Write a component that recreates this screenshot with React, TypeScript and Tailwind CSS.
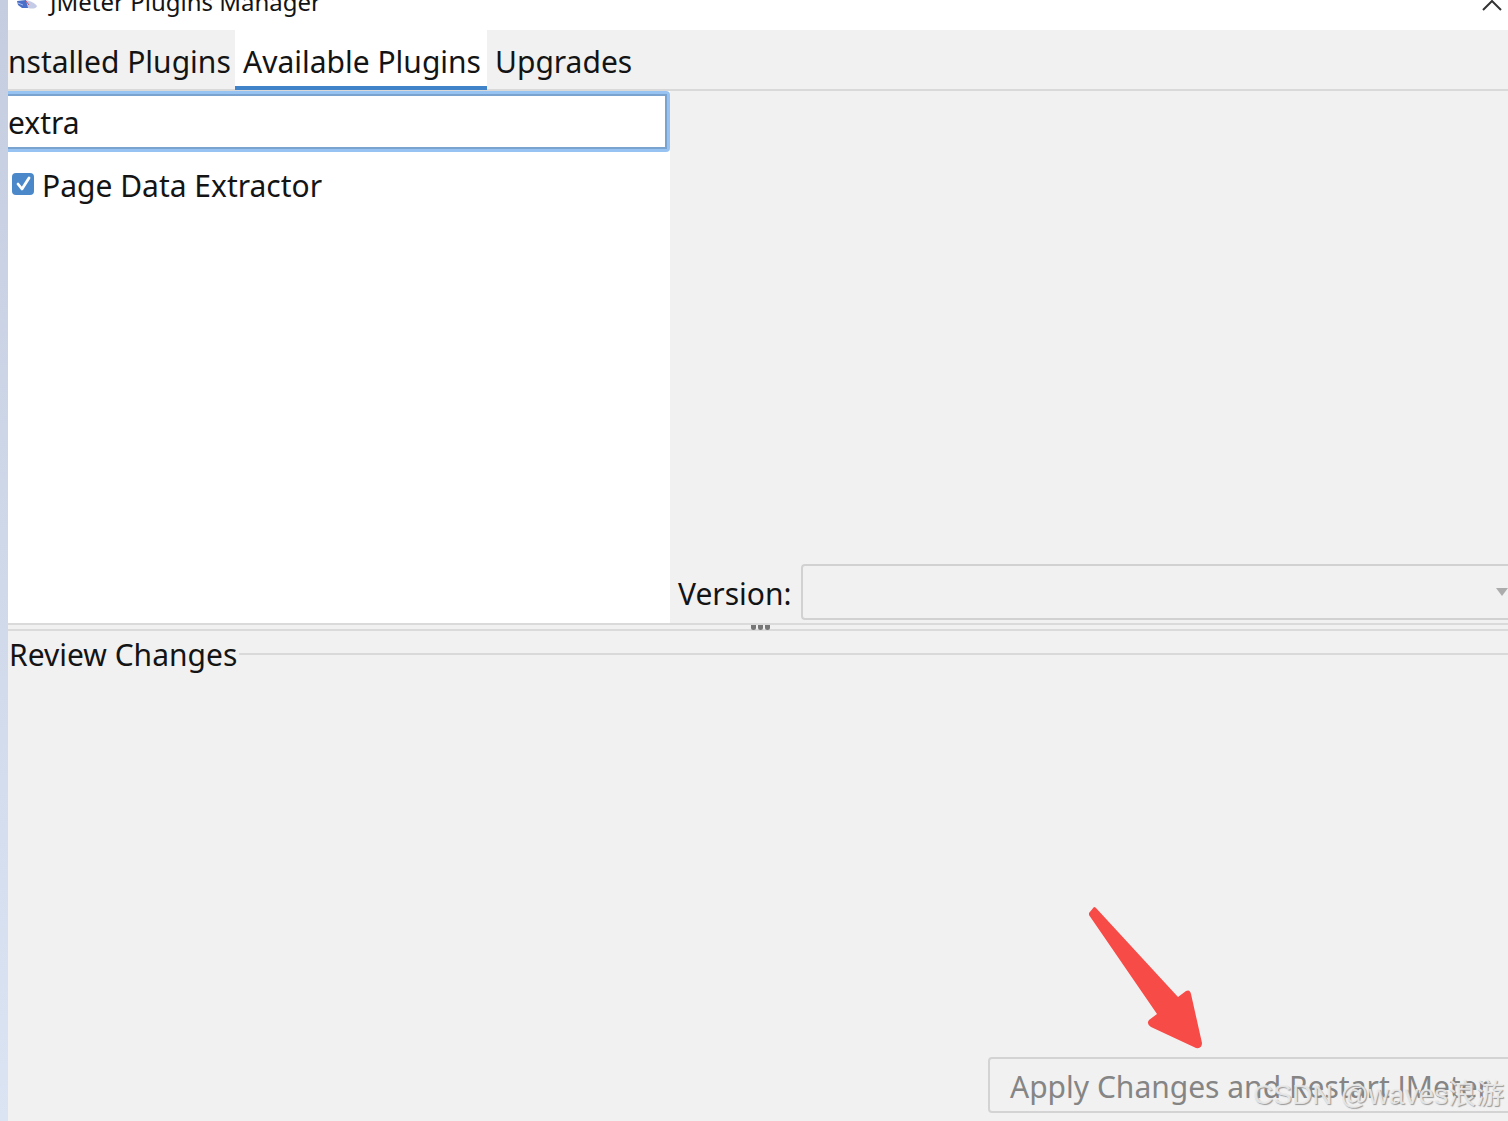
const tabs = [
  { label: 'nstalled Plugins', width: 'w-[227px]', active: false },
  { label: 'Available Plugins', width: 'w-[252px] pl-2', active: true },
  { label: 'Upgrades', width: 'pl-2', active: false },
];

function TitleBar() {
  return (
    <header className="flex h-[30px] items-start justify-between overflow-hidden bg-white pl-2">
      <div className="flex items-start gap-3">
        <svg className="h-3 w-[22px]" viewBox="0 0 22 12" aria-hidden="true">
          <path d="M1 1 L10 0 L13 8 L6 8 L2 5 Z" fill="#4a6fc8" />
          <path d="M2 3 L7 5" stroke="#a9bdee" strokeWidth="1" />
          <path d="M10 0 C14 1 19 3 21 6 C20 9 16 9 12 8 Z" fill="#c3cbe6" />
          <path d="M10 1 L13 5" stroke="#c8506a" strokeWidth="1" />
        </svg>
        <h1 className="-mt-4 text-2xl leading-9">JMeter Plugins Manager</h1>
      </div>
      <button type="button" aria-label="Maximize" className="-mt-1.5 mr-1">
        <svg className="h-5 w-6" viewBox="0 0 24 20" fill="none" stroke="#333" strokeWidth="2">
          <path d="M3 16 L12 7 L21 16" />
        </svg>
      </button>
    </header>
  );
}

function TabStrip() {
  return (
    <nav className="flex h-[61px] border-b-2 border-[#d9d9d9]" role="tablist">
      {tabs.map((tab) => (
        <button
          key={tab.label}
          type="button"
          role="tab"
          aria-selected={tab.active}
          className={`flex h-[60px] shrink-0 items-start whitespace-nowrap pt-3 ${tab.width} ${
            tab.active ? 'border-b-4 border-[#4083c9] bg-white' : ''
          }`}
        >
          {tab.label}
        </button>
      ))}
    </nav>
  );
}

function PluginList() {
  return (
    <div className="flex w-[662px] shrink-0 flex-col bg-white">
      <div className="rounded-r border-y-3 border-r-3 border-[#97c3f3]">
        <input
          type="text"
          aria-label="Search plugins"
          defaultValue="extra"
          className="block h-[55px] w-full border-y-2 border-r-2 border-[#7ba3d0] bg-white pt-0.5 outline-none"
        />
      </div>
      <label className="flex items-center gap-2 pl-1 pt-3.5">
        <span className="relative -mt-1 flex size-[22px]">
          <input type="checkbox" defaultChecked className="size-full appearance-none rounded-sm bg-[#4a88c9]" />
          <svg className="pointer-events-none absolute inset-0" viewBox="0 0 22 22" fill="none" stroke="#fff" strokeWidth="2.8" strokeLinecap="round" strokeLinejoin="round">
            <path d="M6 11 L10 16 L17 5" />
          </svg>
        </span>
        Page Data Extractor
      </label>
    </div>
  );
}

function PluginDetails() {
  return (
    <div className="flex min-w-0 flex-1 items-end overflow-hidden pb-[3px] pl-2">
      <label htmlFor="version" className="w-[123px] shrink-0 pb-1.5">
        Version:
      </label>
      <div className="relative -mr-1 flex-1">
        <select id="version" disabled className="block h-14 w-full appearance-none rounded border-2 border-[#d1d1d1] bg-[#f1f1f1]" />
        <svg className="pointer-events-none absolute right-1 top-6 h-2 w-3" viewBox="0 0 12 8" fill="#acacac">
          <path d="M0 0 H12 L6 8 Z" />
        </svg>
      </div>
    </div>
  );
}

function Splitter() {
  return (
    <div role="separator" className="flex h-2 justify-center gap-0.5 border-y-2 border-[#dadada] pl-1">
      <span className="size-[5px] rounded-b-full bg-[#777]" />
      <span className="size-[5px] rounded-b-full bg-[#777]" />
      <span className="size-[5px] rounded-b-full bg-[#777]" />
    </div>
  );
}

function ReviewChanges() {
  return (
    <section className="flex flex-1 flex-col overflow-hidden">
      <div className="flex items-start gap-0.5 pl-px pt-1">
        <h2>Review Changes</h2>
        <span className="mt-[18px] h-0.5 flex-1 bg-[#d9d9d9]" />
      </div>
      <div className="mt-auto flex flex-col items-end">
        <svg className="mr-[304px] h-[144px] w-[116px]" viewBox="0 0 116 144" fill="#f74b47" aria-hidden="true">
          <path d="M1 6 L6 0 Q7 0 8 1 L90 90 L98 84 Q102 82 103 87 L114 136 Q114 142 108 141 L63 120 Q58 117 61 113 L69 107 L1 8 Z" />
        </svg>
        <button
          type="button"
          disabled
          className="-mr-1 mb-2 mt-1.5 h-14 whitespace-nowrap rounded border-2 border-[#d3d3d3] px-5 pt-1 text-[#858585]"
        >
          Apply Changes and Restart JMeter
        </button>
      </div>
    </section>
  );
}

export default function App() {
  return (
    <div className="relative flex min-h-screen overflow-hidden bg-[#f1f1f1] font-['Noto_Sans','Noto_Sans_CJK_SC',sans-serif] text-[30px] leading-10 text-[#141414]">
      <div className="w-2 shrink-0 bg-linear-to-b from-[#c5cde0] to-[#dae4f3]" />
      <main className="flex min-w-0 flex-1 flex-col">
        <TitleBar />
        <TabStrip />
        <div className="flex h-[532px]">
          <PluginList />
          <PluginDetails />
        </div>
        <Splitter />
        <ReviewChanges />
      </main>
      <p className="pointer-events-none absolute bottom-1.5 right-1 font-['Liberation_Sans','Noto_Sans_CJK_SC',sans-serif] text-[28px] text-[#ececec]/90 [text-shadow:1px_1px_1px_#999]">
        CSDN @waves浪游
      </p>
    </div>
  );
}
